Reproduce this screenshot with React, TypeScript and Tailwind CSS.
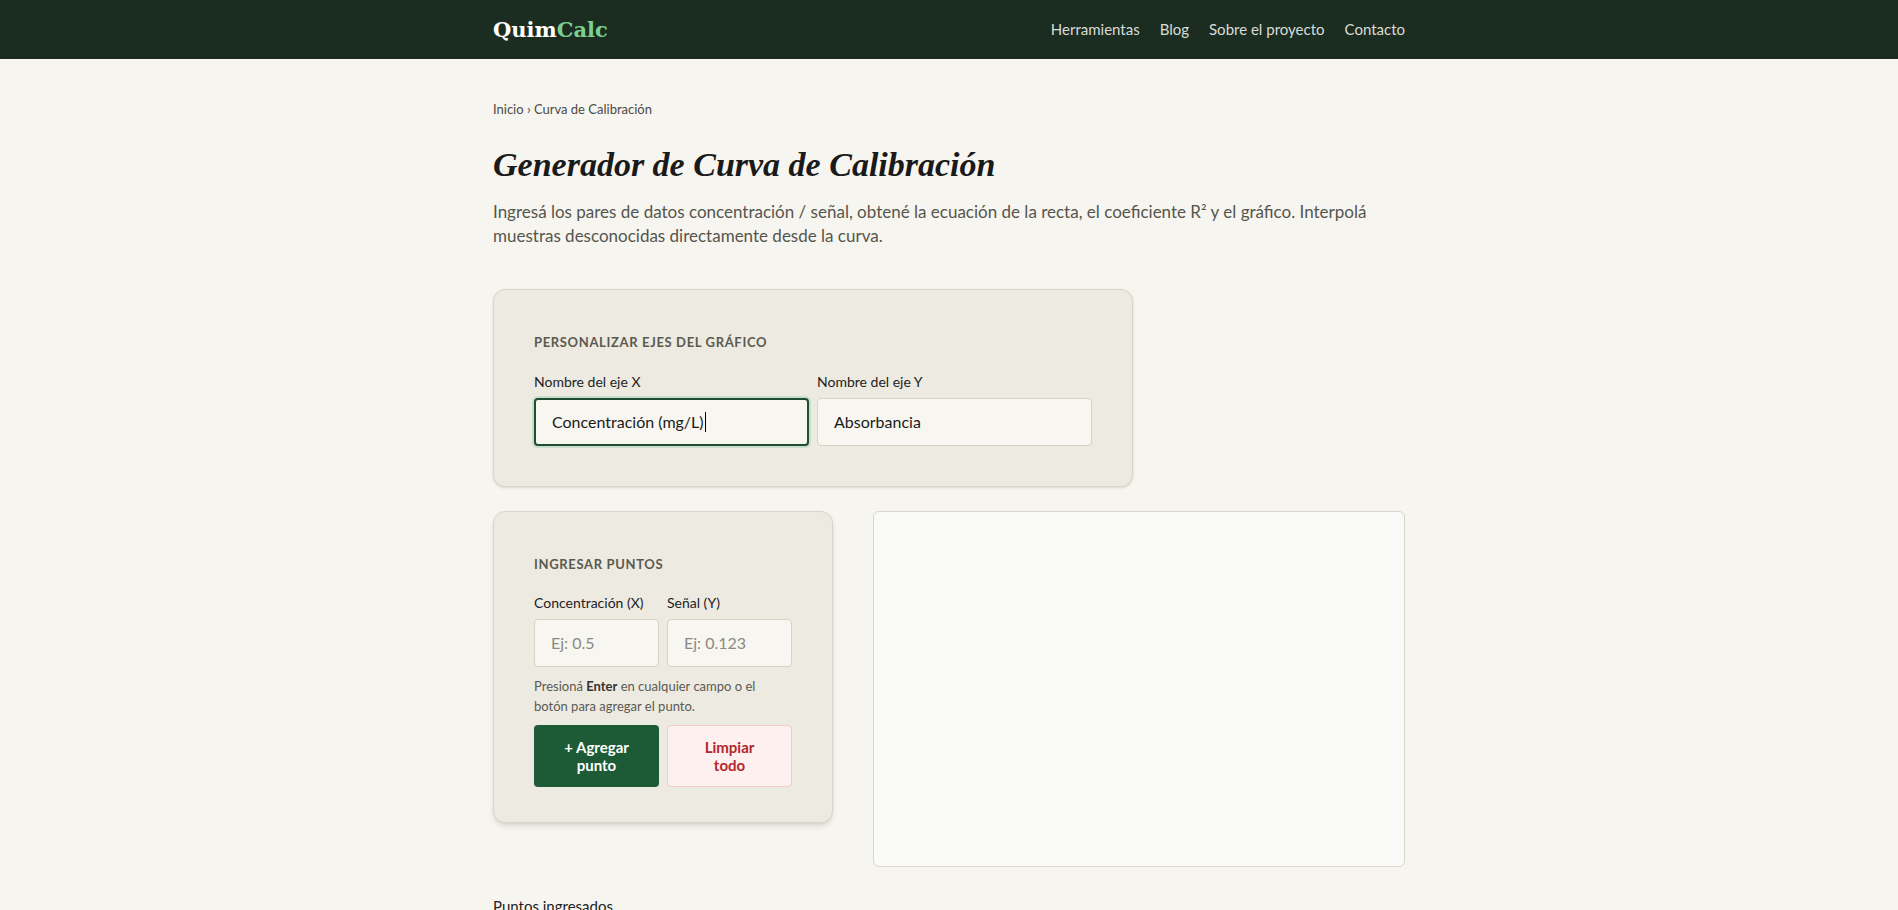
export default function App() {
  const sans = { fontFamily: 'Lato, "Noto Sans", sans-serif' }
  return (
    <div className="min-h-screen bg-[#f7f5f0] text-[#1a1a1a]" style={sans}>
      {/* Header */}
      <header className="h-[59px] bg-[#1b2d21]">
        <div className="mx-auto flex h-full w-[912px] items-center justify-between">
          <div className="text-[21px] font-bold" style={{ fontFamily: '"DejaVu Serif", serif' }}>
            <span className="text-white">Quim</span>
            <span className="text-[#7ccf93]">Calc</span>
          </div>
          <nav className="flex gap-5 text-[15px] text-[#d9dcd6]">
            <span>Herramientas</span>
            <span>Blog</span>
            <span>Sobre el proyecto</span>
            <span>Contacto</span>
          </nav>
        </div>
      </header>

      <main className="mx-auto w-[912px] pt-[41px]">
        <div className="text-[13px] text-[#4b4b45]">Inicio › Curva de Calibración</div>

        <h1
          className="mt-[24px] text-[34px] font-bold italic leading-tight text-[#1a1a1a]"
          style={{ fontFamily: '"Liberation Serif", "DejaVu Serif", serif' }}
        >
          Generador de Curva de Calibración
        </h1>
        <p className="mt-[14px] text-[17px] leading-[24px] text-[#55554d]">
          Ingresá los pares de datos concentración / señal, obtené la ecuación de la recta, el coeficiente R² y el gráfico. Interpolá
          <br />
          muestras desconocidas directamente desde la curva.
        </p>

        {/* Axes card */}
        <section className="mt-[41px] w-[640px] rounded-xl border border-[#d9d5c8] bg-[#edeae2] px-[40px] pt-[43px] pb-[40px] shadow-sm">
          <div className="text-[13px] font-bold tracking-wider text-[#5a5a50]">PERSONALIZAR EJES DEL GRÁFICO</div>
          <div className="mt-[18px] grid grid-cols-2 gap-2">
            <div>
              <label className="block text-[14px] text-[#222]">Nombre del eje X</label>
              <div className="mt-[6px] flex h-[48px] items-center rounded border-2 border-[#1f4d30] bg-[#f8f6f1] px-4 text-[16px] ring-2 ring-[#c9dccd]">
                Concentración (mg/L)<span className="ml-px inline-block h-[20px] w-px bg-black" />
              </div>
            </div>
            <div>
              <label className="block text-[14px] text-[#222]">Nombre del eje Y</label>
              <div className="mt-[6px] flex h-[48px] items-center rounded border border-[#d6d2c6] bg-[#f8f6f1] px-4 text-[16px]">
                Absorbancia
              </div>
            </div>
          </div>
        </section>

        {/* Points + chart */}
        <div className="mt-[24px] flex gap-[40px]">
          <section className="h-[312px] w-[340px] rounded-xl border border-[#d9d5c8] bg-[#edeae2] px-[40px] pt-[43px] shadow-md">
            <div className="text-[13px] font-bold tracking-wider text-[#5a5a50]">INGRESAR PUNTOS</div>
            <div className="mt-[18px] grid grid-cols-2 gap-2">
              <div>
                <label className="block whitespace-nowrap text-[14px] text-[#222]">Concentración (X)</label>
                <div className="mt-[6px] flex h-[48px] items-center rounded border border-[#d6d2c6] bg-[#f8f6f1] px-4 text-[16px] text-[#8a8a82]">
                  Ej: 0.5
                </div>
              </div>
              <div>
                <label className="block text-[14px] text-[#222]">Señal (Y)</label>
                <div className="mt-[6px] flex h-[48px] items-center rounded border border-[#d6d2c6] bg-[#f8f6f1] px-4 text-[16px] text-[#8a8a82]">
                  Ej: 0.123
                </div>
              </div>
            </div>
            <p className="mt-[9px] text-[13px] leading-[20px] text-[#5a5a52]">
              Presioná <b className="text-[#333]">Enter</b> en cualquier campo o el botón para agregar el punto.
            </p>
            <div className="mt-[9px] grid grid-cols-2 gap-2">
              <button className="h-[62px] rounded bg-[#1c5b36] px-4 text-[15px] font-bold leading-[18px] text-white">
                + Agregar
                <br />
                punto
              </button>
              <button className="h-[62px] rounded border border-[#f3c9c9] bg-[#fff0f0] px-4 text-[15px] font-bold leading-[18px] text-[#b3262d]">
                Limpiar
                <br />
                todo
              </button>
            </div>
          </section>
          <div className="h-[356px] flex-1 rounded-md border border-[#d9d5c8] bg-[#fafaf9]" />
        </div>

        <div className="mt-[28px] text-[15px] text-[#222]">Puntos ingresados</div>
      </main>
    </div>
  )
}
